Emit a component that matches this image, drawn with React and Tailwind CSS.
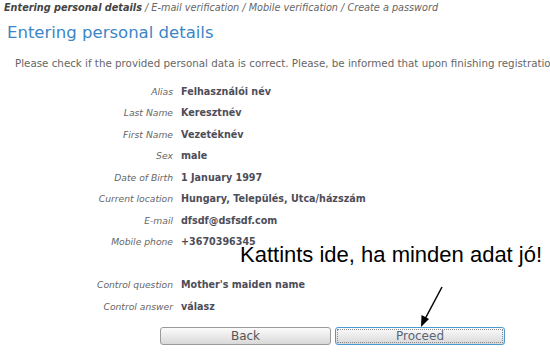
const ROWS = [
  ['Alias', 'Felhasználói név'],
  ['Last Name', 'Keresztnév'],
  ['First Name', 'Vezetéknév'],
  ['Sex', 'male'],
  ['Date of Birth', '1 January 1997'],
  ['Current location', 'Hungary, Település, Utca/házszám'],
  ['E-mail', 'dfsdf@dsfsdf.com'],
  ['Mobile phone', '+3670396345'],
  ['', ''],
  ['Control question', "Mother's maiden name"],
  ['Control answer', 'válasz'],
]

function Row({ label, value }) {
  return (
    <div className="flex items-center h-[21.5px]">
      <div className="w-[173px] text-right italic text-[9.2px] text-[#666]">{label}</div>
      <div className="pl-[8px] font-bold text-[9.6px] text-[#4d4d58]">{value}</div>
    </div>
  )
}

export default function App() {
  return (
    <div className="relative w-[550px] h-[352px] overflow-hidden bg-white font-['DejaVu_Sans',Verdana,sans-serif]">
      {/* breadcrumb */}
      <div className="pl-[4px] pt-[1px] h-[15px] leading-[14px] text-[9.7px] italic text-[#666] whitespace-nowrap">
        <span className="font-bold text-[#444]">Entering personal details</span> / E-mail verification / Mobile verification / Create a password
      </div>

      <h1 className="pl-[7px] mt-[7px] h-[22px] leading-[22px] text-[16.5px] text-[#3b86c6]">
        Entering personal details
      </h1>

      <p className="pl-[15px] mt-[12px] h-[14px] leading-[14px] text-[10.3px] text-[#666] whitespace-nowrap">
        Please check if the provided personal data is correct. Please, be informed that upon finishing registration
      </p>

      <div className="mt-[11px]">
        {ROWS.map(([l, v], i) => <Row key={i} label={l} value={v} />)}
      </div>

      <div className="flex gap-[4px] pl-[160px] mt-[9px]">
        <button className="w-[171px] h-[18px] rounded-[3px] border border-[#9a9a9a] bg-gradient-to-b from-[#fbfbfb] to-[#d9d9d9] text-[12px] leading-[14px] text-[#555]">
          Back
        </button>
        <button className="w-[170px] h-[18px] rounded-[3px] border border-[#4a9ad6] bg-gradient-to-b from-[#fbfbfb] to-[#d9d9d9] text-[12px] leading-[14px] text-[#5a6575] outline outline-1 outline-dotted outline-offset-[-3px] outline-[#888]">
          Proceed
        </button>
      </div>

      {/* annotation overlay */}
      <div className="absolute left-[240px] top-[242px] text-[22px] leading-[26px] text-black font-['Liberation_Sans',Arial,sans-serif] whitespace-nowrap">
        Kattints ide, ha minden adat jó!
      </div>
      <svg className="absolute left-0 top-0" width="550" height="352" viewBox="0 0 550 352">
        <line x1="442" y1="287" x2="425" y2="319" stroke="#000" strokeWidth="1.5" />
        <polygon points="421,327 421.5,315 429,319" fill="#000" />
      </svg>
    </div>
  )
}
